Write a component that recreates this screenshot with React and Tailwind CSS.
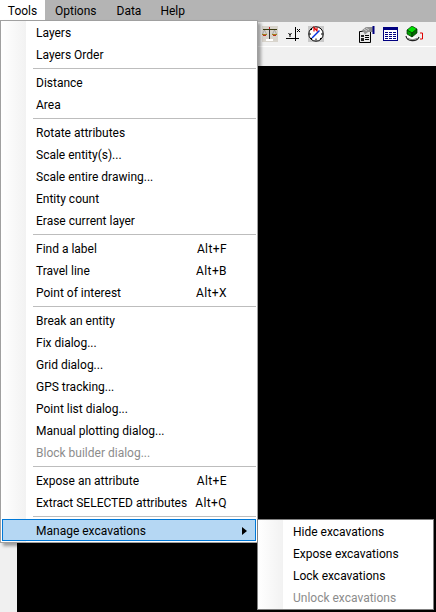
import React from "react";

const groups = [
  [{ label: "Layers" }, { label: "Layers Order" }],
  [{ label: "Distance" }, { label: "Area" }],
  [
    { label: "Rotate attributes" },
    { label: "Scale entity(s)..." },
    { label: "Scale entire drawing..." },
    { label: "Entity count" },
    { label: "Erase current layer" },
  ],
  [
    { label: "Find a label", key: "Alt+F" },
    { label: "Travel line", key: "Alt+B" },
    { label: "Point of interest", key: "Alt+X" },
  ],
  [
    { label: "Break an entity" },
    { label: "Fix dialog..." },
    { label: "Grid dialog..." },
    { label: "GPS tracking..." },
    { label: "Point list dialog..." },
    { label: "Manual plotting dialog..." },
    { label: "Block builder dialog...", disabled: true },
  ],
  [
    { label: "Expose an attribute", key: "Alt+E" },
    { label: "Extract SELECTED attributes", key: "Alt+Q" },
  ],
];

const subItems = ["Hide excavations", "Expose excavations", "Lock excavations", "Unlock excavations"];

const MenuRow = ({ label, hotkey, disabled }) => (
  <div className={`h-[22px] flex items-center justify-between pt-[2px] pl-[35px] pr-[30px] whitespace-nowrap ${disabled ? "text-[#8c8c8c]" : "text-black"}`}>
    <span>{label}</span>
    {hotkey && <span className="tracking-[0.4px]">{hotkey}</span>}
  </div>
);

const ScalesIcon = () => (
  <svg width="16" height="16" viewBox="0 0 16 16" className="bg-[#d8d4cc]">
    <path d="M1 3.5h14" stroke="#3a3a10" strokeWidth="1" />
    <path d="M7.5 1v12" stroke="#333" strokeWidth="1" />
    <path d="M7 1h1v2H7z" fill="#c02020" />
    <path d="M0 8.5h5" stroke="#a08020" strokeWidth="1" />
    <path d="M10 8.5h5" stroke="#a08020" strokeWidth="1" />
    <path d="M1 9.5h3M11 9.5h3" stroke="#c03020" strokeWidth="1" />
    <path d="M2.5 4L0.5 8M2.5 4l2 4M12.5 4l-2 4M12.5 4l2 4" stroke="#8a8a8a" strokeWidth="0.6" fill="none" />
    <path d="M4 13h7v2H4z" fill="#fff" />
  </svg>
);

const AxisIcon = () => (
  <svg width="16" height="16" viewBox="0 0 16 16">
    <path d="M10.5 1v14M1 12.5h13" stroke="#000" strokeWidth="1" />
    <path d="M3.5 7l1.5 2 1.5-2M5 9v2" stroke="#000" strokeWidth="1" fill="none" />
    <path d="M12 3l3 3M15 3l-3 3" stroke="#000" strokeWidth="1" />
  </svg>
);

const CompassIcon = () => (
  <svg width="16" height="16" viewBox="0 0 16 16" className="bg-[#c8c8c8]">
    <circle cx="8" cy="8" r="7.2" fill="#fff" stroke="#000" strokeWidth="1" />
    <path d="M8 12.5v2M1 8h2M13 8h2M3 3l1 1M12 12l1 1M3 13l1-1" stroke="#000" strokeWidth="1" />
    <path d="M6 5.5V1.5L9 5V1.5" stroke="#e00000" strokeWidth="1.2" fill="none" />
    <path d="M4 12L11.5 4.5" stroke="#0030e0" strokeWidth="1.5" />
  </svg>
);

const FormIcon = () => (
  <svg width="17" height="17" viewBox="0 0 17 17">
    <path d="M1.5 5.5h11v11h-11z" fill="#e8e8e8" stroke="#000" strokeWidth="1" />
    <path d="M3 9h3v2H3zM3 12h3v3H3z" fill="#222" />
    <path d="M7 9.5h4M7 11.5h4M7 13.5h4" stroke="#000" strokeWidth="1" />
    <path d="M3 5l5-4h7v5H10L7 8.5 5.5 6z" fill="#8f8f8f" />
    <path d="M6 3l3 2M8 2l3 2" stroke="#e8e8e8" strokeWidth="0.7" />
    <path d="M15.5 0v8" stroke="#000080" strokeWidth="2" />
  </svg>
);

const TableIcon = () => (
  <svg width="15" height="14" viewBox="0 0 15 14">
    <path d="M0 0h15v14H0z" fill="#000080" />
    <path d="M1 3h13v10H1z" fill="#fff" />
    <path d="M2 5h3v1H2zM6 5h3v1H6zM10 5h3v1h-3zM2 7h3v1H2zM6 7h3v1H6zM10 7h3v1h-3zM2 9h3v1H2zM6 9h3v1H6zM10 9h3v1h-3zM2 11h3v1H2zM6 11h3v1H6zM10 11h3v1h-3z" fill="#000080" />
  </svg>
);

const LayersIcon = () => (
  <svg width="18" height="16" viewBox="0 0 18 16">
    <path d="M1 10c1 6 11 6 13 1" stroke="#222" strokeWidth="1.2" fill="#fff" />
    <path d="M3 12c2 2 7 2 9 0" stroke="#777" strokeWidth="1" fill="none" />
    <path d="M7 0l5 3-5 4-5-3z" fill="#00e000" stroke="#003000" strokeWidth="0.7" />
    <path d="M2 4l5 3v4L2 8z" fill="#00a000" stroke="#003000" strokeWidth="0.7" />
    <path d="M12 3L7 7v4l5-4z" fill="#007000" stroke="#003000" strokeWidth="0.7" />
    <path d="M15 7h2.5v6H15" stroke="#e00000" strokeWidth="1" fill="none" />
  </svg>
);

export default function App() {
  return (
    <div
      className="relative w-[436px] h-[612px] overflow-hidden flex flex-col bg-black text-[12px]"
      style={{ fontFamily: "Roboto, 'Open Sans', sans-serif" }}
    >
      {/* Menu bar */}
      <div className="h-[22px] bg-[#b4b4b4] flex items-center text-black">
        <span className="w-[45px] h-full bg-white flex items-center justify-center">Tools</span>
        <span className="ml-[10px]">Options</span>
        <span className="ml-[20px]">Data</span>
        <span className="ml-[19px]">Help</span>
      </div>

      {/* Toolbar */}
      <div className="h-[24px] bg-[#f0f0f0] flex items-center pl-[262px]">
        <ScalesIcon />
        <div className="ml-[7px] flex"><AxisIcon /></div>
        <div className="ml-[7px] flex"><CompassIcon /></div>
        <div className="ml-[34px] flex"><FormIcon /></div>
        <div className="ml-[8px] flex"><TableIcon /></div>
        <div className="ml-[7px] flex"><LayersIcon /></div>
      </div>
      <div className="h-[20px] bg-[#f0f0f0] border-t border-white" />

      {/* Drawing area */}
      <div className="flex-1 flex">
        <div className="w-[17px] bg-[#f0f0f0]" />
        <div className="flex-1 bg-black" />
      </div>

      {/* Tools menu */}
      <div className="absolute left-0 top-[20px] w-[258px] h-[523px] bg-white border border-[#a0a0a0] shadow-[3px_3px_3px_rgba(0,0,0,0.35)]">
        <div className="absolute left-0 top-0 bottom-0 w-[25px] bg-gradient-to-r from-white to-[#f2f2f2]" />
        <div className="relative">
          {groups.map((group, i) => (
            <div key={i}>
              {group.map((item) => (
                <MenuRow key={item.label} label={item.label} hotkey={item.key} disabled={item.disabled} />
              ))}
              <div className="h-[6px] flex items-center ml-[32px] mr-[1px]">
                <div className="w-full h-px bg-[#bdbdbd]" />
              </div>
            </div>
          ))}
          <div className="h-[22px] flex items-center pt-px pl-[33px] pr-[8px] mx-px bg-[#b5d7f3] border border-[#0078d7] text-black">
            <span className="flex-1 whitespace-nowrap">Manage excavations</span>
            <svg width="5" height="8" viewBox="0 0 5 8">
              <path d="M0 0l5 4-5 4z" fill="#000" />
            </svg>
          </div>
        </div>
      </div>

      {/* Submenu */}
      <div className="absolute left-[257px] top-[519px] w-[177px] h-[91px] bg-white border border-[#808080]">
        <div className="absolute left-0 top-0 bottom-0 w-[25px] bg-gradient-to-r from-white to-[#f2f2f2]" />
        <div className="relative">
          {subItems.map((label, i) => (
            <div key={label} className={`h-[22px] flex items-center pt-[2px] pl-[35px] whitespace-nowrap ${i === 3 ? "text-[#8c8c8c]" : "text-black"}`}>
              {label}
            </div>
          ))}
        </div>
      </div>
    </div>
  );
}
